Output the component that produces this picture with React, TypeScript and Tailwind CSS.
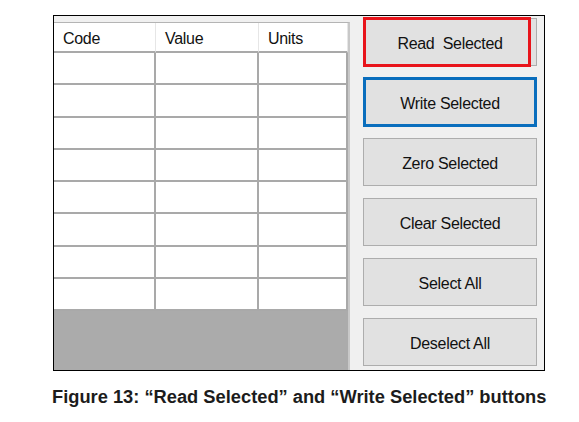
const COLUMNS = ['Code', 'Value', 'Units']
const ROWS = 8

const BUTTONS = [
  { label: 'Read  Selected', mark: 'red' },
  { label: 'Write Selected', mark: 'blue' },
  { label: 'Zero Selected' },
  { label: 'Clear Selected' },
  { label: 'Select All' },
  { label: 'Deselect All' },
]

function ActionButton({ label, mark }: { label: string; mark?: string }) {
  return (
    <div className="relative h-[48px] w-[174px] shrink-0">
      <button className="flex h-full w-full items-center justify-center border border-[#adadad] bg-[#e1e1e1] pt-[3px] text-[16px] tracking-[-0.3px] text-[#111] whitespace-pre">
        {label}
      </button>
      {/* annotation boxes drawn over the screenshot */}
      {mark === 'red' && (
        <div className="absolute left-0 top-[-1px] h-[50px] w-[168px] border-[3px] border-[#e8141b]" />
      )}
      {mark === 'blue' && (
        <div className="absolute left-0 top-[-1px] h-[50px] w-[174px] border-[3px] border-[#0a6ebd]" />
      )}
    </div>
  )
}

export default function App() {
  return (
    <div className="h-[422px] w-[579px] bg-white font-['Liberation_Sans',Arial,sans-serif]">
      <div className="pt-[15px] pl-[53px]">
        <div className="flex h-[356px] w-[492px] overflow-hidden border border-black bg-[#f0f0f0]">
          {/* data grid */}
          <div className="flex w-[296px] flex-col pt-[6px]">
            <div className="flex flex-1 flex-col border-t border-[#b4b4b4] border-r-2 border-r-[#c8c8c8]">
              <div className="grid h-[30px] grid-cols-[102px_103px_89px] bg-white">
                {COLUMNS.map((c) => (
                  <div
                    key={c}
                    className="flex items-center border-b-2 border-r border-[#a9a9a9] border-r-[#e6e6e6] pl-[9px] pt-[3px] text-[16px] tracking-[-0.3px] text-[#111]"
                  >
                    {c}
                  </div>
                ))}
              </div>
              {Array.from({ length: ROWS }).map((_, i) => (
                <div key={i} className="grid h-[32.25px] grid-cols-[102px_103px_89px] bg-white">
                  {COLUMNS.map((c) => (
                    <div key={c} className="border-b-2 border-r-2 border-[#a9a9a9]" />
                  ))}
                </div>
              ))}
              <div className="flex-1 bg-[#ababab]" />
            </div>
          </div>

          {/* buttons */}
          <div className="ml-[13px] flex flex-col gap-[12px] pt-[2px]">
            {BUTTONS.map((b) => (
              <ActionButton key={b.label} label={b.label} mark={b.mark} />
            ))}
          </div>
        </div>
      </div>

      <p className="mt-[15px] pl-[52px] text-[18.3px] leading-[22px] font-bold text-[#1c1c1c]">
        Figure 13: “Read Selected” and “Write Selected” buttons
      </p>
    </div>
  )
}
